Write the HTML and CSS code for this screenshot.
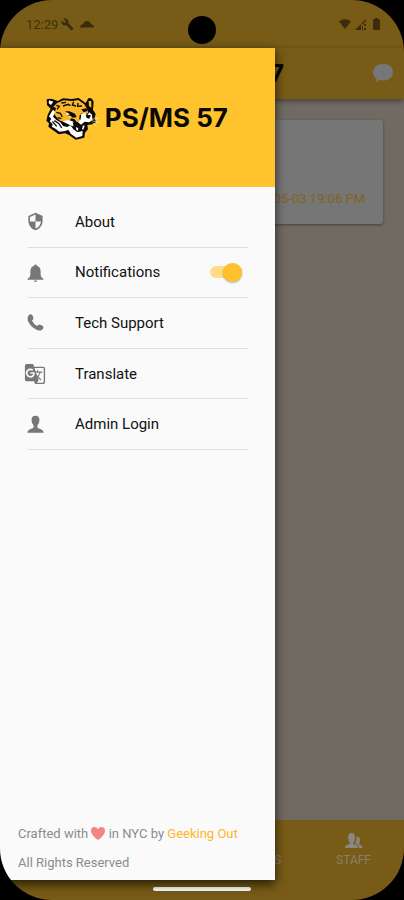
FILE: index.html
```html
<!DOCTYPE html>
<html lang="en">
<head>
<meta charset="utf-8">
<meta name="viewport" content="width=device-width, initial-scale=1">
<title>PS/MS 57</title>
<link rel="stylesheet" href="styles.css">
</head>
<body>
<div class="phone">
  <header class="status">
    <span class="clock">12:29</span>
    <svg class="wrench" viewBox="0 0 24 24"><path d="M22.700 19l-9.100-9.100c.9-2.300.4-5-1.500-6.900-2-2-5-2.400-7.400-1.300L9 6 6 9 1.600 4.700C.4 7.100.9 10.100 2.900 12.100c1.900 1.900 4.600 2.400 6.900 1.500l9.100 9.100c.4.4 1 .4 1.400 0l2.300-2.300c.5-.4.5-1.100.1-1.400z"/></svg>
    <svg class="cloud" viewBox="0 0 14 8"><path d="M0 7.500Q0 4.500 3 4Q4 1 7 1Q10 1 11 4Q14 4.500 14 7.500z"/></svg>
    <span class="camera"></span>
    <div class="signals">
      <svg class="wifi" viewBox="0 0 12 10"><path d="M0 2.500Q6-2 12 2.500L6 10z"/></svg>
      <svg class="cell" viewBox="0 0 12 12"><path d="M0 12L6 6V12zM7 5L11 1V3L7 7zM7 8h1v4H7zM9 6h2v2H9zM9 10h2v2H9z"/></svg>
      <svg class="battery" viewBox="0 0 7 12"><path d="M2 0h3v1h1q1 0 1 1v9q0 1-1 1H1q-1 0-1-1V2q0-1 1-1h1z"/></svg>
    </div>
  </header>
  <div class="appbar">
    <span class="appbar-title">PS/MS 57</span>
    <button class="chat" aria-label="Messages"><svg viewBox="0 0 22 19"><path d="M11 0C17 0 21 3.500 21 8.200S17 16.500 11 16.500c-1.500 0-2.500-.2-3.500-.5Q6 18 3.500 18.500Q5 16.500 4.500 14.500C2 13 1 10.800 1 8.200 1 3.500 5 0 11 0z"/></svg></button>
  </div>
  <main class="feed">
    <article class="card"><time>05-03 19:06 PM</time></article>
  </main>
  <nav class="tabs">
    <a class="tab" href="#">S</a>
    <a class="tab" href="#">
      <svg viewBox="0 0 18 16"><path d="M0 15q0-3 3-3.500 2-.4 2-1.500-2-2-2-5.500Q3 0 6.500 0T10 4.500Q10 8 8 10q0 1 2 1.500 3 .5 3 3.500zM11 4q4-1 4 3 0 2-1 3.500 0 1 1.500 1.500 2 .5 2 3H14q0-3-3-4l-1-.8q1.500-2 1.500-4z"/></svg>
      STAFF
    </a>
  </nav>
  <footer class="gesture"><span></span></footer>

  <aside class="drawer">
    <div class="brand">
      <svg class="tiger" viewBox="6 12 168 132" role="img" aria-label="Tiger">
        <path fill="#0b0a08" d="M17 22Q27 17 42 24L50 27 66 19 92 21 113 18 134 33 142 19Q153 15 158 30L156 53 164 66 161 78 165 90 155 97 139 99 141 112 132 122 130 137 104 143 84 129 72 124 53 127 36 115 22 104 24 94 16 86 20 68 29 50 18 39z"/>
        <path fill="#fff" d="M24 25L37 29 30 39 23 34zM30 62L36 53 43 60 36 74 46 84 58 91 66 102 79 105 88 99 97 112 108 120 125 116 124 132 106 137 90 126 82 113 73 117 55 119 41 109 33 105 35 96 26 88 31 81 24 73z"/>
        <path fill="#fbb62a" d="M45 48L37 44 48 33 68 25 94 27 112 24 130 37 136 47 142 62 133 67 122 64 116 70 119 86 108 91 101 82 91 79 84 87 72 90 57 86 47 76 40 67z"/>
        <path fill="#ffc42d" d="M143 27L151 27 151 47 144 42z"/>
        <path fill="#fff" d="M119 67L130 63 139 69 145 61 153 68 154 84 145 91 131 89 120 98 111 91 118 84zM78 61L93 66 100 74 88 75 76 67zM64 88L82 84 95 88 104 99 96 103 80 96z"/>
        <path fill="#0b0a08" d="M72 58L85 58 102 65 107 75 96 77 87 71 78 70 87 67zM121 52L136 49 139 57 128 61zM95 91L110 95 119 103 133 95 138 101 130 116 110 119 99 109zM134 68L150 70 145 80 137 78z"/>
        <path fill="#fff" d="M105 105L112 109 111 116 106 114zM126 100L131 101 127 113 123 112z"/>
        <path fill="none" stroke="#0b0a08" stroke-width="4" d="M61 33L75 31M66 42L82 37 88 41M98 29L94 39 105 42M111 33L110 43 123 42M46 40L55 43 48 52M46 61L58 64 64 75M50 77L61 80M40 86L54 95 62 108M34 88L47 103M119 69L116 82"/>
        <path fill="none" stroke="#fff1c0" stroke-width="2" d="M150 82L173 79M151 86L174 91M154 92L166 101"/>
      </svg>
      <h1>PS/MS 57</h1>
    </div>
    <ul class="menu">
      <li><a href="#"><span class="icon"><svg viewBox="0 0 24 24"><path d="M12 1L3 5v6c0 5.550 3.840 10.740 9 12 5.160-1.260 9-6.450 9-12V5l-9-4zm0 10.990h7c-.53 4.120-3.280 7.790-7 8.940V12H5V6.300l7-3.110v8.800z"/></svg></span>About</a></li>
      <li><label for="notify"><span class="icon"><svg viewBox="0 0 24 24"><path d="M12 2q1.500 0 1.700 1.600Q18.500 5 18.500 11v4l1 3 2.500 2v1H2v-1l2.500-2 1-3v-4q0-6 4.800-7.400Q10.500 2 12 2zM10 22h4q-.5 2-2 2t-2-2z"/></svg></span>Notifications</label><input id="notify" class="switch" type="checkbox" checked></li>
      <li><a href="#"><span class="icon"><svg viewBox="0 0 24 24"><path d="M3 3.500Q5 1 7 2q2 1.500 2.500 5 0 1.500-2 2.500Q9.500 14 14 16.500q1.500-2 3-2 4 1 5 3 .8 2-2 4-2.500 1.500-6 0Q6 18 2.500 10 1 6 3 3.500z"/></svg></span>Tech Support</a></li>
      <li><a href="#"><span class="icon"><svg class="wide" viewBox="0 0 24 24"><path d="M21 4H11l-1-3H3c-1.100 0-2 .9-2 2v15c0 1.100.9 2 2 2h8l1 3h9c1.100 0 2-.9 2-2V6c0-1.100-.9-2-2-2zM7 16c-2.760 0-5-2.240-5-5s2.240-5 5-5c1.350 0 2.480.5 3.350 1.300L9.030 8.570c-.38-.36-1.040-.78-2.030-.78-1.740 0-3.150 1.440-3.150 3.210S5.260 14.210 7 14.210c2.010 0 2.840-1.440 2.920-2.410H7v-1.710h4.680c.07.31.12.61.12 1.020C11.800 13.970 9.890 16 7 16zm6.170-5.420h3.700c-.43 1.250-1.110 2.430-2.050 3.470-.31-.35-.6-.72-.86-1.100l-.79-2.370zm8.330 9.920c0 .55-.45 1-1 1H14l2-2.500-1.040-3.100 3.100 3.100.92-.92-3.300-3.250.02-.02c1.130-1.250 1.930-2.690 2.400-4.220H20v-1.300h-4.530V8h-1.290v1.290h-1.440L11.460 5.500h9.040c.55 0 1 .45 1 1v14z"/></svg></span>Translate</a></li>
      <li><a href="#"><span class="icon"><svg viewBox="0 0 24 24"><path d="M12 1q5 0 5 5.500 0 4-2.500 6.500v2.500q0 1 2 1.500 5.500 1.500 6 5.500h-21q.5-4 6-5.500 2-.5 2-1.500V13Q7 10.500 7 6.500 7 1 12 1z"/></svg></span>Admin Login</a></li>
    </ul>
    <div class="credits">
      <p>Crafted with <svg class="heart" viewBox="0 0 14 13" role="img" aria-label="love"><path d="M7 13Q0 8 0 4 0 0 3.500 0 6 0 7 2.200 8 0 10.500 0 14 0 14 4q0 4-7 9z"/></svg> in NYC by <a href="#">Geeking Out</a></p>
      <p>All Rights Reserved</p>
    </div>
  </aside>
</div>
</body>
</html>
```
FILE: styles.css
```css
* { box-sizing: border-box; }

body {
  margin: 0;
  background: #000;
  font-family: Roboto, "Liberation Sans", sans-serif;
}

a { color: inherit; text-decoration: none; }

.phone {
  position: relative;
  display: flex;
  flex-direction: column;
  min-height: 100vh;
  border-radius: 52px;
  overflow: hidden;
  background: #775b16;
}

.status {
  position: relative;
  display: flex;
  align-items: center;
  height: 48px;
  padding: 0 24px 0 26px;
  color: #40320f;
  fill: #3b2d0c;
}

.clock { font-size: 13px; }
.wrench { width: 13px; height: 13px; margin-left: 3px; }
.cloud { width: 14px; height: 8px; margin-left: 6px; }

.camera {
  position: absolute;
  top: 16px;
  left: 50%;
  width: 28px;
  height: 28px;
  margin-left: -14px;
  border-radius: 50%;
  background: #000;
}

.signals { display: flex; align-items: center; gap: 4px; margin-left: auto; }
.wifi { width: 12px; height: 10px; }
.cell { width: 12px; height: 12px; }
.battery { width: 7px; height: 12px; margin-left: 2px; }

.appbar {
  display: flex;
  align-items: center;
  justify-content: flex-end;
  height: 51px;
  padding-right: 10px;
  box-shadow: 0 2px 5px rgba(0, 0, 0, 0.4);
  z-index: 1;
}

.appbar-title {
  margin-right: 88px;
  font: 700 24px/32px Inter, sans-serif;
  color: #080602;
}

.chat { display: flex; padding: 0; border: 0; background: none; }
.chat svg { width: 22px; height: 19px; fill: #777; }

.feed { flex: 1; padding: 21px; background: #716a63; }

.card {
  display: flex;
  align-items: flex-end;
  justify-content: flex-end;
  height: 104px;
  padding: 16px 18px;
  border-radius: 3px;
  background: #767676;
  box-shadow: 0 1px 3px rgba(0, 0, 0, 0.4);
  font-size: 13px;
  line-height: 18px;
  color: #80631e;
}

.tabs {
  display: flex;
  align-items: flex-end;
  justify-content: flex-end;
  gap: 55px;
  height: 60px;
  padding: 0 33px 13px 0;
  font-size: 12px;
  line-height: 14px;
  color: #8a7f6b;
}

.tab { display: flex; flex-direction: column; align-items: center; gap: 4px; }
.tab svg { width: 18px; height: 16px; fill: #8a8781; }

.gesture { display: flex; justify-content: center; height: 20px; padding-top: 7px; }
.gesture span { width: 98px; height: 4px; border-radius: 2px; background: #fff; }

.drawer {
  position: absolute;
  top: 48px;
  bottom: 20px;
  left: 0;
  width: 68%;
  display: flex;
  flex-direction: column;
  background: #fafafa;
  box-shadow: 0 4px 10px rgba(0, 0, 0, 0.7);
  z-index: 2;
}

.brand {
  display: flex;
  align-items: center;
  justify-content: center;
  gap: 6px;
  height: 139px;
  padding-right: 4px;
  background: #ffc42d;
}

.tiger { width: 56px; height: 44px; }
.brand h1 { margin: 0; font: 700 26px/32px Inter, sans-serif; color: #0c0903; }

.menu {
  display: grid;
  grid-auto-rows: 1fr;
  height: 263px;
  margin: 0;
  padding: 10px 27px 0 28px;
  list-style: none;
}

.menu li {
  display: flex;
  align-items: center;
  justify-content: space-between;
  border-bottom: 1px solid #dedede;
  font-size: 15px;
  line-height: 20px;
  color: #111;
}

.menu a,
.menu label { display: flex; align-items: center; gap: 33px; }

.icon { display: flex; justify-content: center; width: 14px; }
.icon svg { flex: none; width: 19px; height: 19px; fill: #777; }
.icon .wide { width: 22px; height: 22px; }

.switch {
  appearance: none;
  display: flex;
  align-items: center;
  justify-content: flex-end;
  width: 32px;
  height: 12px;
  margin: 0 6px 0 0;
  border-radius: 6px;
  background: #ffdc85;
}

.switch::before {
  content: "";
  width: 19px;
  height: 19px;
  border-radius: 50%;
  background: #ffc02a;
  box-shadow: 0 1px 2px rgba(0, 0, 0, 0.3);
}

.credits {
  display: grid;
  gap: 13px;
  margin-top: auto;
  padding: 0 18px 9px;
  font-size: 13px;
  line-height: 16px;
  color: #8b8b8b;
}

.credits p { margin: 0; }
.credits a { color: #ffb52c; }
.heart { width: 14px; height: 13px; fill: #ef8683; vertical-align: -2px; }
```
